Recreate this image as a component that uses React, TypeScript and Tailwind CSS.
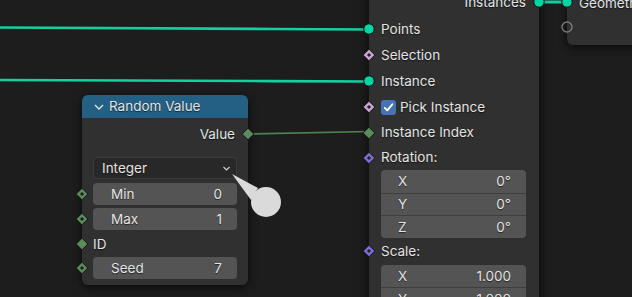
import React from 'react'

type SocketKind = 'geo' | 'geoHollow' | 'int' | 'intDot' | 'bool' | 'rot'

function Socket({ kind, className = '' }: { kind: SocketKind; className?: string }) {
  if (kind === 'geo' || kind === 'geoHollow') {
    return (
      <svg width="14" height="14" viewBox="0 0 14 14" className={`absolute ${className}`}>
        {kind === 'geo' ? (
          <circle cx="7" cy="7" r="5.2" fill="#00d6a3" stroke="#111" strokeWidth="1" />
        ) : (
          <circle cx="7" cy="7" r="5" fill="none" stroke="#7a7a7a" strokeWidth="1.4" />
        )}
      </svg>
    )
  }
  const fill = kind === 'bool' ? '#cca6d6' : kind === 'rot' ? '#7b6fd6' : '#5a8c5c'
  const dot = kind !== 'int'
  return (
    <svg width="14" height="14" viewBox="0 0 14 14" className={`absolute ${className}`}>
      <path d="M7 1.2 L12.8 7 L7 12.8 L1.2 7 Z" fill={fill} stroke="#151515" strokeWidth="1" />
      {dot && <rect x="5.5" y="5.5" width="3" height="3" fill="#222" transform="rotate(45 7 7)" />}
    </svg>
  )
}

function Field({ label, value }: { label: string; value: string }) {
  return (
    <div className="flex h-[22px] items-center justify-between rounded-[4px] bg-[#545454] pl-[18px] pr-[15px]">
      <span>{label}</span>
      <span>{value}</span>
    </div>
  )
}

function VectorFields({ rows }: { rows: [string, string][] }) {
  return (
    <div className="flex flex-col overflow-hidden rounded-[4px] bg-[#545454]">
      {rows.map(([l, v], i) => (
        <div
          key={l}
          className={`flex h-[22.6px] items-center justify-between pl-[17px] pr-[15px] ${i > 0 ? 'border-t border-[#3e3e3e]' : ''}`}
        >
          <span>{l}</span>
          <span>{v}</span>
        </div>
      ))}
    </div>
  )
}

function Row({ children, h = 'h-[26px]', className = '' }: { children: React.ReactNode; h?: string; className?: string }) {
  return <div className={`relative flex items-center ${h} ${className}`}>{children}</div>
}

export default function App() {
  return (
    <div
      className="relative h-[297px] w-[632px] overflow-hidden bg-[#1d1d1d] text-[13.5px] text-[#e4e4e4]"
      style={{ fontFamily: 'Inter, "Noto Sans", sans-serif', textShadow: '0 1px 1px rgba(0,0,0,0.6)' }}
    >
      {/* links */}
      <svg className="absolute inset-0" width="632" height="297">
        <path d="M0 27.5 C 150 28, 250 29, 369 29.5" stroke="#14d0a0" strokeWidth="2.6" fill="none" />
        <path d="M0 80 C 150 80.5, 250 81, 369 81.5" stroke="#14d0a0" strokeWidth="2.6" fill="none" />
        <path d="M248 134 L369 131.5" stroke="#4f8350" strokeWidth="1.6" fill="none" />
        <path d="M539 2 L567 2" stroke="#14d0a0" strokeWidth="3" fill="none" />
      </svg>

      {/* Geometry node (top right) */}
      <div className="absolute left-[567px] top-[-20px] h-[65px] w-[90px] rounded-b-[6px] rounded-tl-[6px] bg-[#303030] shadow-[0_2px_8px_rgba(0,0,0,0.7)]">
        <div className="relative mt-[10px] flex h-[26px] items-center pl-[12px]">
          <Socket kind="geo" className="left-[-7px] top-[5px]" />
          <span>Geometry</span>
        </div>
        <div className="relative h-[26px]">
          <Socket kind="geoHollow" className="left-[-7px] top-[4px]" />
        </div>
      </div>

      {/* Instance on Points node */}
      <div className="absolute left-[369px] top-[-11px] h-[330px] w-[170px] bg-[#303030] shadow-[0_0_10px_rgba(0,0,0,0.75)]">
        <div className="flex flex-col pl-[12px] pr-[13px]">
          <Row h="h-[27px]" className="justify-end">
            <span>Instances</span>
            <Socket kind="geo" className="right-[-20px] top-[6px]" />
          </Row>
          <Row>
            <Socket kind="geo" className="left-[-19px] top-[6px]" />
            <span>Points</span>
          </Row>
          <Row>
            <Socket kind="bool" className="left-[-19px] top-[6px]" />
            <span>Selection</span>
          </Row>
          <Row>
            <Socket kind="geo" className="left-[-19px] top-[6px]" />
            <span>Instance</span>
          </Row>
          <Row>
            <Socket kind="bool" className="left-[-19px] top-[6px]" />
            <span className="mr-[4px] flex h-[15px] w-[15px] items-center justify-center rounded-[3px] bg-[#4772b3]">
              <svg width="11" height="11" viewBox="0 0 11 11">
                <path d="M1.8 5.8 L4.3 8.3 L9.3 2.3" stroke="#fff" strokeWidth="1.8" fill="none" strokeLinecap="round" strokeLinejoin="round" />
              </svg>
            </span>
            <span>Pick Instance</span>
          </Row>
          <Row h="h-[25px]">
            <Socket kind="int" className="left-[-19px] top-[5.5px]" />
            <span>Instance Index</span>
          </Row>
          <Row h="h-[25px]">
            <Socket kind="rot" className="left-[-19px] top-[5.5px]" />
            <span>Rotation:</span>
          </Row>
          <VectorFields rows={[['X', '0°'], ['Y', '0°'], ['Z', '0°']]} />
          <Row h="h-[27px]">
            <Socket kind="rot" className="left-[-19px] top-[6.5px]" />
            <span>Scale:</span>
          </Row>
          <VectorFields rows={[['X', '1.000'], ['Y', '1.000'], ['Z', '1.000']]} />
        </div>
      </div>

      {/* Random Value node */}
      <div className="absolute left-[82px] top-[95px] flex h-[190px] w-[166px] flex-col rounded-[6px] bg-[#303030] shadow-[0_2px_10px_rgba(0,0,0,0.7)]">
        <div className="flex h-[23px] items-center gap-[5px] rounded-t-[6px] bg-[#236083] pl-[12px]">
          <svg width="10" height="10" viewBox="0 0 10 10">
            <path d="M1 3 L5 7 L9 3" stroke="#e6e6e6" strokeWidth="1.3" fill="none" />
          </svg>
          <span>Random Value</span>
        </div>
        <div className="flex flex-col px-[11px]">
          <Row h="h-[24px]" className="mt-[4px] justify-end pr-[2px]">
            <span>Value</span>
            <Socket kind="int" className="right-[-18px] top-[5px]" />
          </Row>
          <div className="mt-[11px] flex h-[22px] items-center justify-between rounded-[4px] border border-[#3a3a3a] bg-[#282828] pl-[8px] pr-[5px]">
            <span>Integer</span>
            <svg width="9" height="9" viewBox="0 0 9 9">
              <path d="M1.5 3 L4.5 6 L7.5 3" stroke="#d0d0d0" strokeWidth="1.2" fill="none" />
            </svg>
          </div>
          <div className="relative mt-[4px]">
            <Socket kind="intDot" className="left-[-18px] top-[4px]" />
            <Field label="Min" value="0" />
          </div>
          <div className="relative mt-[3px]">
            <Socket kind="intDot" className="left-[-18px] top-[4px]" />
            <Field label="Max" value="1" />
          </div>
          <Row h="h-[27px]" className="pt-[1px]">
            <Socket kind="int" className="left-[-18px] top-[7px]" />
            <span>ID</span>
          </Row>
          <div className="relative">
            <Socket kind="intDot" className="left-[-18px] top-[4px]" />
            <Field label="Seed" value="7" />
          </div>
        </div>
      </div>

      {/* cursor blob */}
      <svg className="absolute left-0 top-0" width="632" height="297">
        <path d="M232 174 L258 188 L251 200 Z" fill="#dadada" />
        <circle cx="266" cy="202" r="15" fill="#dadada" />
      </svg>
    </div>
  )
}
